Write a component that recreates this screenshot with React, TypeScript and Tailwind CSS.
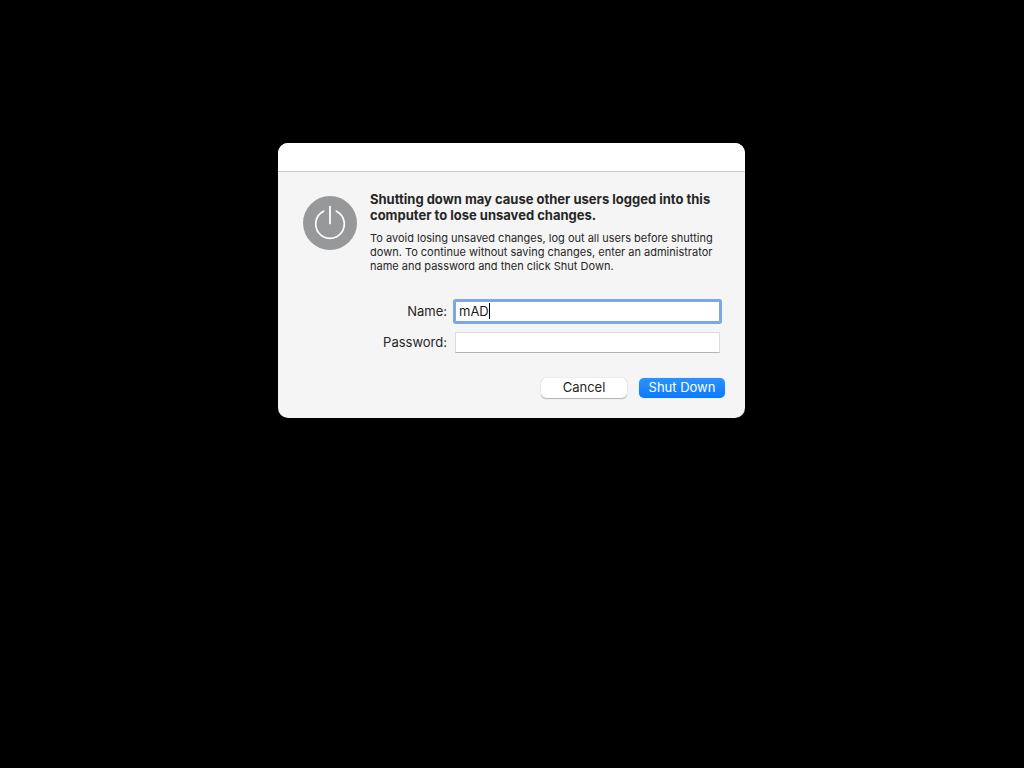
import { useState } from "react";

function PowerIcon() {
  return (
    <svg viewBox="0 0 54 54" className="mt-[5px] size-[54px] shrink-0" aria-hidden="true">
      <circle cx="27" cy="27" r="27" fill="#969899" />
      <path
        d="M20.6 15.2A14.3 14.3 0 1 0 33.4 15.2"
        fill="none"
        stroke="#fff"
        strokeWidth="1.7"
        strokeLinecap="round"
      />
      <path d="M27 10.6V27.4" stroke="#fff" strokeWidth="1.8" strokeLinecap="round" />
    </svg>
  );
}

export default function App() {
  const [name, setName] = useState("mAD");
  const [password, setPassword] = useState("");

  return (
    <main className="flex min-h-screen items-start justify-center bg-black pt-[143px] pr-[17px] pl-4 font-['Inter','Liberation_Sans',sans-serif] text-[#262626]">
      <section
        role="dialog"
        aria-labelledby="dialog-title"
        className="w-full max-w-[467px] overflow-hidden rounded-[10px] bg-[#f5f5f5]"
      >
        <header className="h-[29px] border-b border-[#c9c9c9] bg-white" />
        <form className="pt-[19px] pr-5 pb-5 pl-[25px]" onSubmit={(e) => e.preventDefault()}>
          <div className="flex gap-[13px]">
            <PowerIcon />
            <div>
              <h1 id="dialog-title" className="text-[13px] leading-4 font-bold">
                Shutting down may cause other users logged into this
                <br />
                computer to lose unsaved changes.
              </h1>
              <p className="mt-2 text-[11px] leading-[14px]">
                To avoid losing unsaved changes, log out all users before shutting
                <br />
                down. To continue without saving changes, enter an administrator
                <br />
                name and password and then click Shut Down.
              </p>
            </div>
          </div>

          <div className="mt-7 mr-[5px] grid grid-cols-[1fr_265px] items-center gap-x-2 gap-y-[10px] text-[13px] leading-4">
            <label htmlFor="name" className="pb-0.5 text-right">
              Name:
            </label>
            <div className="relative flex">
              <input
                id="name"
                type="text"
                value={name}
                onChange={(e) => setName(e.target.value)}
                className="h-[21px] w-full rounded-[1px] border border-[#7aa7e8] bg-white px-[3px] pb-0.5 text-[#1c1c1c] caret-transparent ring-2 ring-[#7aa7e8] outline-none"
              />
              <span className="pointer-events-none absolute inset-y-0 left-1 flex items-center pb-0.5" aria-hidden="true">
                <span className="invisible whitespace-pre">{name}</span>
                <span className="h-4 w-px bg-black" />
              </span>
            </div>
            <label htmlFor="password" className="pb-0.5 text-right">
              Password:
            </label>
            <input
              id="password"
              type="password"
              value={password}
              onChange={(e) => setPassword(e.target.value)}
              className="h-[21px] w-full border border-[#dcdcdc] border-b-[#b4b4b4] bg-white px-[3px] pb-0.5 outline-none"
            />
          </div>

          <div className="mt-[25px] flex justify-end gap-3 text-[13px] leading-4">
            <button
              type="button"
              className="h-5 w-[86px] rounded-[5px] bg-white pb-0.5 shadow-[0_0_1px_rgba(0,0,0,0.3),0_1px_1px_rgba(0,0,0,0.25)]"
            >
              Cancel
            </button>
            <button
              type="submit"
              className="h-5 w-[86px] rounded-[5px] bg-linear-to-b from-[#2a92ff] to-[#0a7aff] pb-0.5 text-white shadow-[0_0_1px_rgba(0,90,220,0.4)]"
            >
              Shut Down
            </button>
          </div>
        </form>
      </section>
    </main>
  );
}
